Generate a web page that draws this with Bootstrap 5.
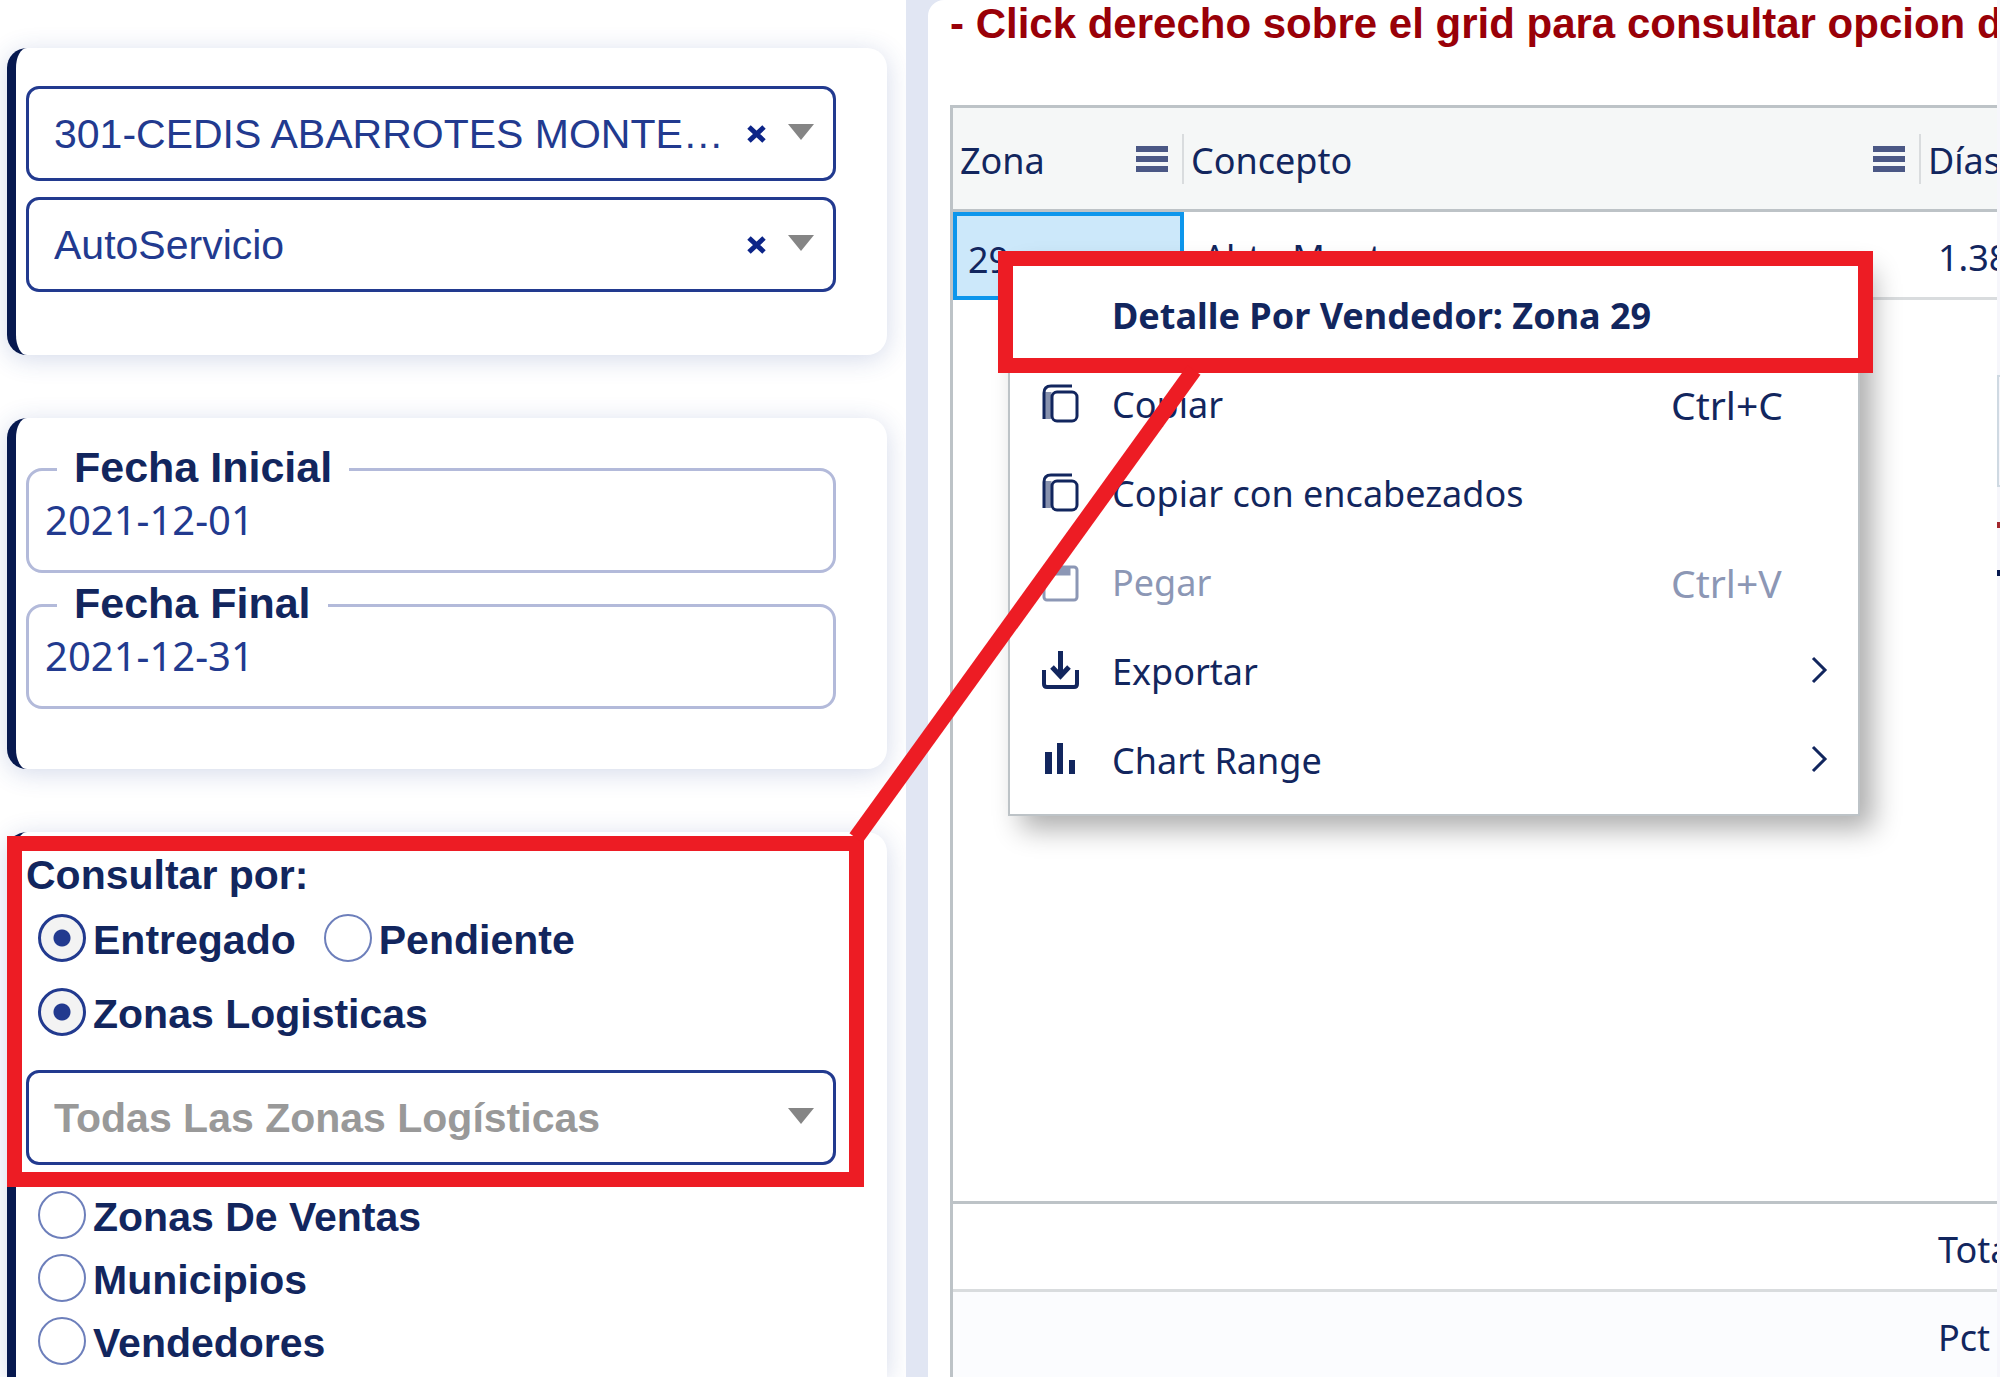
<!DOCTYPE html>
<html lang="es">
<head>
<meta charset="utf-8">
<meta name="viewport" content="width=device-width, initial-scale=1">
<title>Consulta por zona</title>
<link href="https://cdn.jsdelivr.net/npm/bootstrap@5.3.0/dist/css/bootstrap.min.css" rel="stylesheet">
<style>
  :root { --navy: #07194f; --ink: #12265e; --blue: #223a8f; --line: #bdc3c7; --soft: #d9dcde; --alert: #ed1c24; }
  body { background: #e1e6f3; color: var(--ink); font-family: "Liberation Sans", Arial, sans-serif; font-size: 41px; line-height: 48px; overflow: hidden; }
  .app-shell { min-height: 100vh; max-height: 100vh; }
  .side-panel { flex: 0 0 45.3%; padding: 48px 19px 0 7px; gap: 63px; overflow: hidden; }
  .filter-card { border: 0; border-left: 9px solid var(--navy); border-radius: 20px; padding: 0 51px 0 10px; box-shadow: 0 4px 26px rgba(40, 70, 150, .2); }
  .card-company { padding-top: 38px; padding-bottom: 63px; gap: 16px; }
  .card-dates { padding-top: 26px; padding-bottom: 60px; gap: 7px; }
  .card-query { padding-top: 19px; border-bottom-left-radius: 0; border-bottom-right-radius: 0; flex: 1 0 auto; font-weight: 700; }

  .pick { height: 95px; border: 3px solid var(--blue); border-radius: 13px; background: #fff none; color: var(--blue); font-size: 41px; line-height: 48px; padding: 0 100px 0 25px; }
  .pick-hint { color: #999; font-weight: 700; }
  .pick-tools { top: 0; right: 22px; height: 91px; gap: 21px; pointer-events: none; }
  .pick-clear { border: 0; background: none; padding: 4px 0 0; color: #0c2488; line-height: 0; pointer-events: auto; }

  .date-box { border: 3px solid #b3bada; border-radius: 16px; padding: 0 0 24px; }
  .date-box legend { float: none; width: auto; margin: 0 0 0 28px; padding: 2px 17px 6px; font-size: 43px; line-height: 42px; font-weight: 700; }
  .date-box input { border: 0; padding: 0 0 0 16px; height: 52px; color: var(--blue); background: transparent; font-family: "Noto Sans", sans-serif; font-size: 40px; line-height: 52px; }

  .choice { height: 48px; gap: 7px; padding-left: 12px; }
  .choice input { appearance: none; flex: none; width: 48px; height: 48px; margin: 0; border: 2px solid #6d7fbb; border-radius: 50%; background: #fff; }
  .choice input:checked { border: 3px solid var(--blue); background: radial-gradient(circle, var(--blue) 8px, #f3f3f3 9px); }
  .choice span { padding-top: 3px; }
  .gap-row { margin-top: 15px; }
  .gap-wide { margin-top: 26px; }
  .gap-pick { margin-top: 34px; }

  .grid-panel { background: #fff; margin-left: 22px; padding-left: 22px; border-top-left-radius: 16px; overflow: hidden; min-width: 0; }
  .grid-note { height: 105px; color: #990008; font-size: 42px; font-weight: 700; white-space: nowrap; overflow: hidden; }
  .zone-grid { table-layout: fixed; width: 100%; height: calc(100vh - 105px); border-collapse: separate; border-spacing: 0; border: 3px solid var(--line); border-right: 0; border-bottom: 0; font-family: "Noto Sans", sans-serif; font-size: 36px; line-height: 48px; white-space: nowrap; }
  .zone-grid th, .zone-grid td { padding: 0; overflow: hidden; }
  .zone-grid thead th { height: 104px; background: #f5f7f7; border-bottom: 3px solid var(--line); font-weight: 400; }
  .head-cell { height: 50px; padding: 0 14px 0 7px; border-right: 2px solid var(--soft); }
  .head-cell span { padding-top: 4px; }
  .zone-grid th:last-child .head-cell { border: 0; }
  .col-zone { width: 231px; }
  .col-concept { width: 737px; }
  .data-row td { height: 88px; border-bottom: 3px solid var(--soft); padding: 7px 0 0 19px; }
  .data-row td.cell-picked { border: 4px solid #0d96ec; background: #cce8fa; padding-left: 11px; }
  .data-row td:last-child, .total-row td:last-child { padding-left: 17px; }
  .total-row td { height: 88px; border-top: 3px solid var(--line); padding-top: 6px; }
  .percent-row td { border-top-color: var(--soft); background: #fbfcfe; }

  .grid-menu { top: 258px; left: 80px; width: 852px; margin: 0; padding: 11px 0 9px; border: 2px solid var(--line); background: #fff; box-shadow: 13px 13px 26px rgba(0, 0, 0, .32); font-family: "Noto Sans", sans-serif; font-size: 36px; line-height: 48px; }
  .menu-line { width: 100%; height: 89px; border: 0; background: none; padding: 0 29px 0 32px; gap: 33px; color: var(--ink); text-align: left; }
  .menu-line:disabled { color: #8c97b5; }
  .menu-line svg { flex: none; }
  .menu-keys { width: 158px; font-size: 39px; }

  .edge-strip { flex: 0 0 3px; background: #f6f6fb; padding-top: 375px; }
  .edge-box { height: 112px; border: 2px solid #cfd9e2; border-right: 0; }
  .edge-red { height: 6px; margin-top: 35px; background: #a3272d; }
  .edge-navy { height: 6px; margin-top: 42px; background: var(--navy); }
  .callouts { top: 0; left: 0; pointer-events: none; z-index: 10; }
</style>
</head>
<body>
<div class="app-shell d-flex position-relative">

  <aside class="side-panel bg-white d-flex flex-column">
    <section class="card filter-card card-company flex-shrink-0">
      <div class="position-relative">
        <select class="form-select pick" aria-label="Centro de distribución"><option>301-CEDIS ABARROTES MONTE…</option></select>
        <div class="pick-tools position-absolute d-flex align-items-center">
          <button class="pick-clear" type="button" aria-label="Quitar centro"><svg width="21" height="18" viewBox="0 0 21 18"><path d="M3 2l15 14M18 2L3 16" stroke="currentColor" stroke-width="5" fill="none"/></svg></button>
          <svg width="26" height="16" viewBox="0 0 26 16"><path d="M0 0h26L13 16z" fill="#858585"/></svg>
        </div>
      </div>
      <div class="position-relative">
        <select class="form-select pick" aria-label="Canal"><option>AutoServicio</option></select>
        <div class="pick-tools position-absolute d-flex align-items-center">
          <button class="pick-clear" type="button" aria-label="Quitar canal"><svg width="21" height="18" viewBox="0 0 21 18"><path d="M3 2l15 14M18 2L3 16" stroke="currentColor" stroke-width="5" fill="none"/></svg></button>
          <svg width="26" height="16" viewBox="0 0 26 16"><path d="M0 0h26L13 16z" fill="#858585"/></svg>
        </div>
      </div>
    </section>

    <section class="card filter-card card-dates flex-shrink-0">
      <fieldset class="date-box">
        <legend><label for="fecha-inicial">Fecha Inicial</label></legend>
        <input class="d-block w-100" id="fecha-inicial" type="text" value="2021-12-01">
      </fieldset>
      <fieldset class="date-box">
        <legend><label for="fecha-final">Fecha Final</label></legend>
        <input class="d-block w-100" id="fecha-final" type="text" value="2021-12-31">
      </fieldset>
    </section>

    <section class="card filter-card card-query">
      <div>Consultar por:</div>
      <div class="d-flex gap-row">
        <label class="choice d-flex align-items-center"><input type="radio" name="estado" checked><span>Entregado</span></label>
        <label class="choice d-flex align-items-center ms-3"><input type="radio" name="estado"><span>Pendiente</span></label>
      </div>
      <label class="choice d-flex align-items-center gap-wide"><input type="radio" name="agrupar" checked><span>Zonas Logisticas</span></label>
      <div class="position-relative gap-pick">
        <select class="form-select pick pick-hint" aria-label="Zona logística"><option>Todas Las Zonas Logísticas</option></select>
        <div class="pick-tools position-absolute d-flex align-items-center">
          <svg width="26" height="16" viewBox="0 0 26 16"><path d="M0 0h26L13 16z" fill="#858585"/></svg>
        </div>
      </div>
      <label class="choice d-flex align-items-center gap-wide"><input type="radio" name="agrupar"><span>Zonas De Ventas</span></label>
      <label class="choice d-flex align-items-center gap-row"><input type="radio" name="agrupar"><span>Municipios</span></label>
      <label class="choice d-flex align-items-center gap-row"><input type="radio" name="agrupar"><span>Vendedores</span></label>
    </section>
  </aside>

  <main class="grid-panel flex-grow-1 position-relative">
    <div class="grid-note">- Click derecho sobre el grid para consultar opcion de</div>
    <table class="zone-grid">
      <colgroup><col class="col-zone"><col class="col-concept"><col></colgroup>
      <thead>
        <tr>
          <th scope="col"><div class="head-cell d-flex align-items-center justify-content-between"><span>Zona</span><svg width="32" height="26" viewBox="0 0 32 26"><path d="M0 3h32M0 13h32M0 23h32" stroke="#4b5885" stroke-width="6"/></svg></div></th>
          <th scope="col"><div class="head-cell d-flex align-items-center justify-content-between"><span>Concepto</span><svg width="32" height="26" viewBox="0 0 32 26"><path d="M0 3h32M0 13h32M0 23h32" stroke="#4b5885" stroke-width="6"/></svg></div></th>
          <th scope="col"><div class="head-cell d-flex align-items-center"><span>Días</span></div></th>
        </tr>
      </thead>
      <tbody>
        <tr class="data-row"><td class="cell-picked">29</td><td>Abto Monterrey</td><td>1.38</td></tr>
        <tr><td colspan="3"></td></tr>
      </tbody>
      <tfoot>
        <tr class="total-row"><td></td><td></td><td>Total</td></tr>
        <tr class="total-row percent-row"><td></td><td></td><td>Pct</td></tr>
      </tfoot>
    </table>

    <ul class="grid-menu list-unstyled position-absolute">
      <li><button class="menu-line d-flex align-items-center fw-bold" type="button"><svg width="37" height="38"></svg><span>Detalle Por Vendedor: Zona 29</span></button></li>
      <li><button class="menu-line d-flex align-items-center" type="button">
        <svg width="37" height="42" viewBox="0 0 37 42" fill="none" stroke="currentColor" stroke-width="3"><rect x="10" y="8" width="25" height="29" rx="5"/><path d="M30 2H9q-7 0-7 7V35"/><path d="M6 8v27" stroke-opacity=".5" stroke-width="7"/></svg>
        <span class="flex-grow-1">Copiar</span><span class="menu-keys">Ctrl+C</span></button></li>
      <li><button class="menu-line d-flex align-items-center" type="button">
        <svg width="37" height="42" viewBox="0 0 37 42" fill="none" stroke="currentColor" stroke-width="3"><rect x="10" y="8" width="25" height="29" rx="5"/><path d="M30 2H9q-7 0-7 7V35"/><path d="M6 8v27" stroke-opacity=".5" stroke-width="7"/></svg>
        <span>Copiar con encabezados</span></button></li>
      <li><button class="menu-line d-flex align-items-center" type="button" disabled>
        <svg width="37" height="38" viewBox="0 0 37 38" fill="none" stroke="currentColor" stroke-width="3"><rect x="2" y="3" width="33" height="33" rx="3"/><path d="M10 3v7h17V3" fill="currentColor"/></svg>
        <span class="flex-grow-1">Pegar</span><span class="menu-keys">Ctrl+V</span></button></li>
      <li><button class="menu-line d-flex align-items-center" type="button">
        <svg width="37" height="42" viewBox="0 0 37 42" fill="none" stroke="currentColor" stroke-width="4"><path d="M2 19v14q0 3 3 3h27q3 0 3-3V19"/><path d="M18.500 0v24" stroke-width="5"/><path d="M10 16l8.500 9 8.500-9" stroke-width="5"/></svg>
        <span class="flex-grow-1">Exportar</span>
        <svg width="18" height="32" viewBox="0 0 18 32"><path d="M2 2l12 12L2 26" fill="none" stroke="currentColor" stroke-width="3"/></svg></button></li>
      <li><button class="menu-line d-flex align-items-center" type="button">
        <svg width="37" height="42" viewBox="0 0 37 42" fill="currentColor"><path d="M3 12h7v22H3zM15 3h6v31h-6zM27 20h6v14h-6z"/></svg>
        <span class="flex-grow-1">Chart Range</span>
        <svg width="18" height="32" viewBox="0 0 18 32"><path d="M2 2l12 12L2 26" fill="none" stroke="currentColor" stroke-width="3"/></svg></button></li>
    </ul>
  </main>

  <div class="edge-strip">
    <div class="edge-box"></div>
    <div class="edge-red"></div>
    <div class="edge-navy"></div>
  </div>

  <svg class="callouts position-absolute" width="2000" height="1377" viewBox="0 0 2000 1377" fill="none" stroke="#ed1c24" aria-hidden="true">
    <rect x="1005.500" y="258.500" width="860" height="107" stroke-width="15"/>
    <rect x="14.500" y="843.500" width="842" height="336" stroke-width="15"/>
    <path d="M1194 370L856 838" stroke-width="16"/>
  </svg>
</div>
<script src="https://cdn.jsdelivr.net/npm/bootstrap@5.3.0/dist/js/bootstrap.bundle.min.js"></script>
</body>
</html>
